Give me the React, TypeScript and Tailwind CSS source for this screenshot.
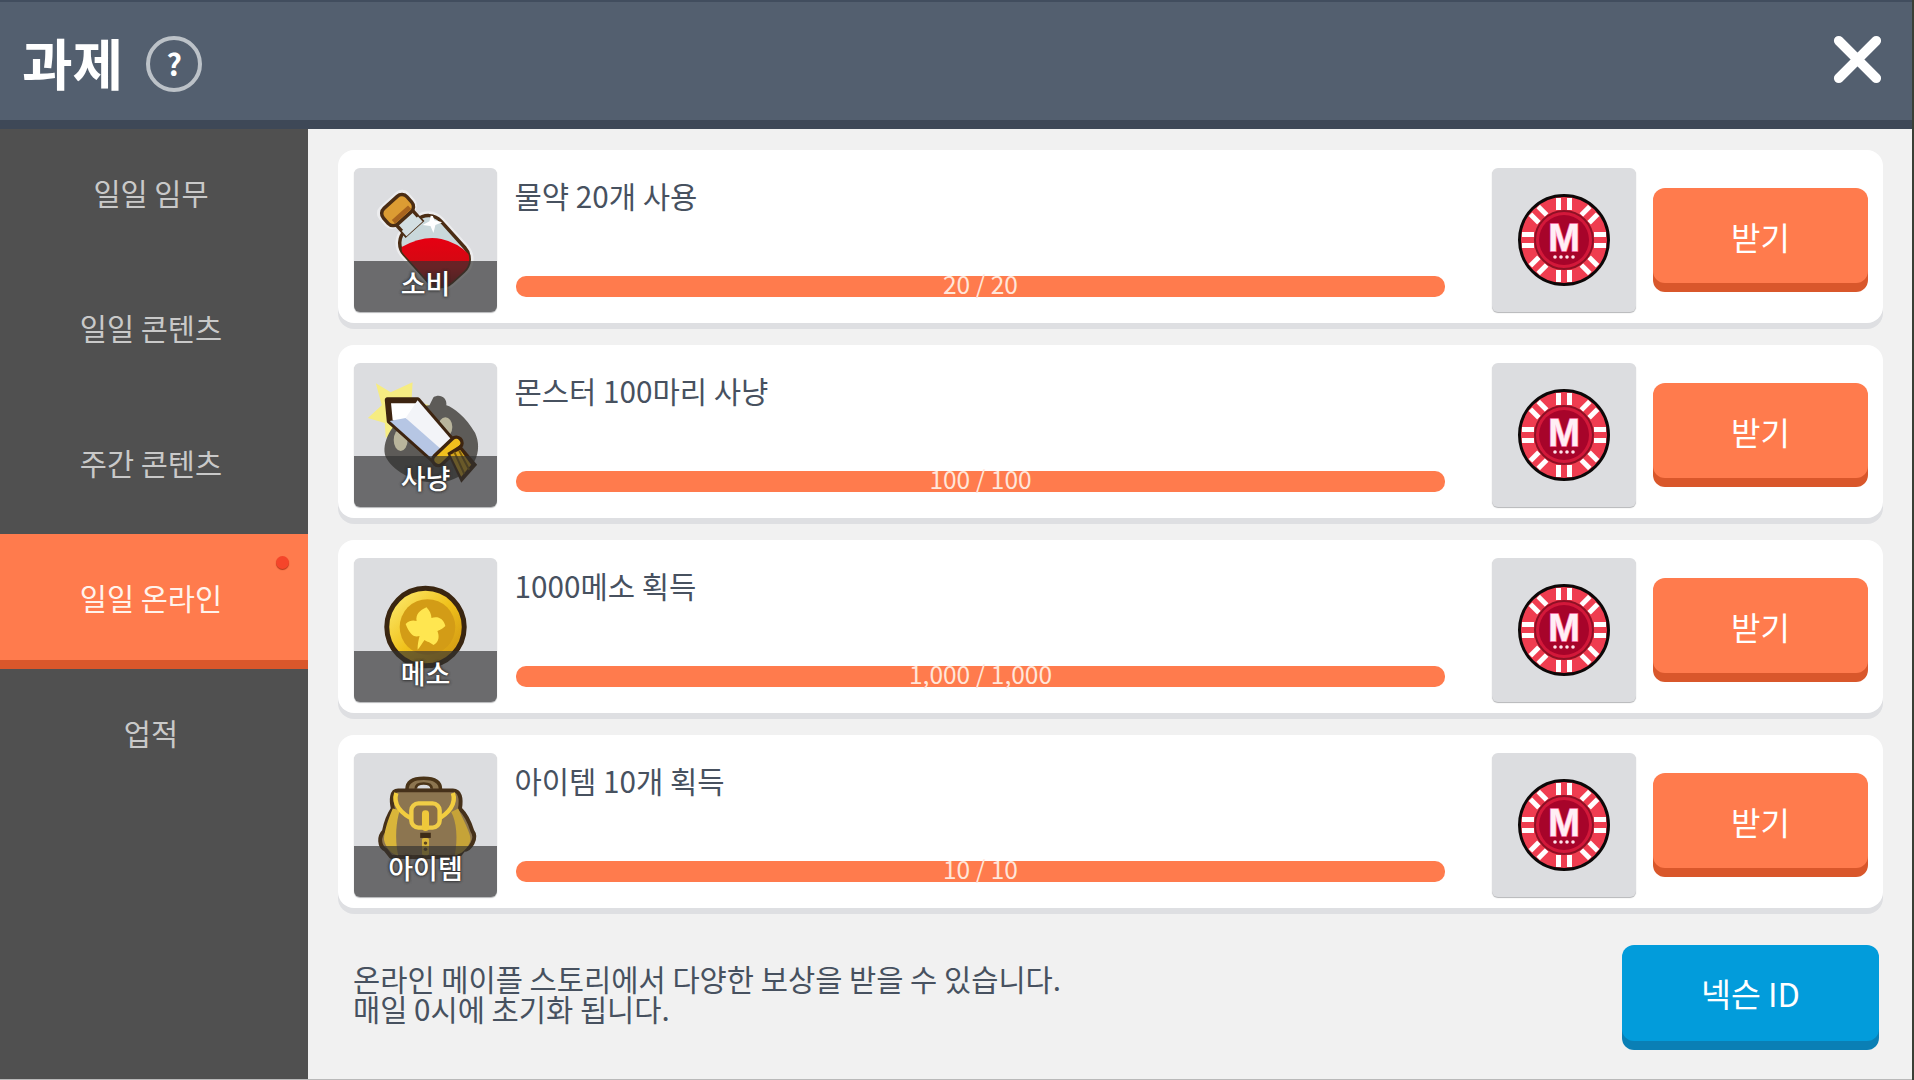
const menu = [
  { label: "일일 임무" },
  { label: "일일 콘텐츠" },
  { label: "주간 콘텐츠" },
  { label: "일일 온라인", active: true },
  { label: "업적" },
];

function BottleIcon() {
  return (
    <svg viewBox="0 0 144 144" className="h-full w-full">
      <defs>
        <clipPath id="bottle-body">
          <rect x="-25" y="-20" width="50" height="70" rx="17" transform="translate(71 72) rotate(-42)" />
        </clipPath>
        <linearGradient id="bottle-liquid" x1="0" y1="0" x2="0" y2="1">
          <stop offset="0" stopColor="#e60012" />
          <stop offset="0.5" stopColor="#d10a12" />
          <stop offset="1" stopColor="#4f0704" />
        </linearGradient>
      </defs>
      <g transform="translate(71 72) rotate(-42)">
        <rect x="-29" y="-24" width="58" height="78" rx="20" fill="#fff" fillOpacity="0.45" />
        <rect x="-20" y="-55" width="40" height="27" rx="9" fill="#fff" fillOpacity="0.45" />
        <rect x="-25" y="-20" width="50" height="70" rx="17" fill="#c9d8db" stroke="#4b2d14" strokeWidth="3.5" />
        <rect x="-11" y="-33" width="22" height="17" fill="#d3dfe2" stroke="#4b2d14" strokeWidth="3.5" />
        <rect x="-11" y="-22" width="22" height="7" fill="#d3dfe2" />
        <rect x="-16" y="-51" width="32" height="21" rx="7" fill="#dc9c33" stroke="#4b2d14" strokeWidth="3.5" />
        <rect x="-11" y="-37" width="22" height="5" fill="#a8641f" />
      </g>
      <g clipPath="url(#bottle-body)">
        <path d="M48 79 Q70 67 88 71 Q106 75 118 89 L118 130 L48 130Z" fill="url(#bottle-liquid)" />
        <path d="M78 44 l3 8 l8 2 l-7 3 l-2 8 l-3 -7 l-8 -1 l7 -4z" fill="#fff" />
      </g>
    </svg>
  );
}

function SwordIcon() {
  return (
    <svg viewBox="0 0 144 144" className="h-full w-full">
      <polygon points="22,20 37,29 59,19 58,37 76,42 60,55 66,72 48,65 32,75 31,60 14,55 28,42" fill="#f6ec82" />
      <path d="M80 34 C86 30 94 34 93 42 C100 44 113 54 122 70 C130 88 122 110 96 118 C72 124 44 114 33 96 C26 84 36 62 52 52 C60 46 70 42 76 42Z" fill="#5d5b58" />
      <ellipse cx="47" cy="77" rx="7" ry="11" fill="#b9b59c" />
      <ellipse cx="92" cy="64" rx="7" ry="10" fill="#b9b59c" />
      <polygon points="34,37 64,37 101,80 83,100 36,58" fill="#fff" stroke="#3d2410" strokeWidth="6" strokeLinejoin="round" />
      <polygon points="52,55 101,80 83,100 36,58" fill="#b6c6e4" />
      <polygon points="52,55 64,37 101,80 92,90" fill="#f3f4f8" />
      <path d="M85 97 L103 80" stroke="#3d2410" strokeWidth="15" strokeLinecap="round" />
      <path d="M85 97 L103 80" stroke="#f0bf1e" strokeWidth="8" strokeLinecap="round" />
      <polygon points="94,90 107,82 124,102 108,120" fill="#3d2410" />
      <polygon points="97,92 107,87 118,102 108,114" fill="#d6a61c" />
      <path d="M101 89 L111 111 M106 88 L116 107" stroke="#7b5c0c" strokeWidth="2" />
    </svg>
  );
}

function CoinIcon() {
  return (
    <svg viewBox="0 0 144 144" className="h-full w-full">
      <defs>
        <linearGradient id="coin-rim" x1="0" y1="0" x2="1" y2="1">
          <stop offset="0" stopColor="#fff07a" />
          <stop offset="0.5" stopColor="#f0c21c" />
          <stop offset="1" stopColor="#c98c10" />
        </linearGradient>
      </defs>
      <circle cx="72" cy="69" r="39" fill="url(#coin-rim)" stroke="#3a2611" strokeWidth="5" />
      <circle cx="74" cy="69" r="28" fill="#d39c16" />
      <path d="M73 49 C76 52 78 56 78 60 C84 58 90 60 92 68 C88 72 86 72 84 73 C86 78 86 84 80 87 C76 84 74 84 71 82 C68 86 66 90 64 92 C64 86 65 82 66 78 C60 80 56 76 52 66 C56 62 60 62 63 63 C62 56 66 52 73 49Z" fill="#ffe650" />
    </svg>
  );
}

function BagIcon() {
  return (
    <svg viewBox="0 0 144 144" className="h-full w-full">
      <g transform="translate(72 25) scale(0.89 0.87) translate(-73 -21)">
        <path d="M52 34 C52 24 60 21 71 21 C82 21 90 24 90 34" fill="#8c7550" stroke="#4a3418" strokeWidth="4" />
        <path d="M62 33 C62 28 66 27 71 27 C76 27 80 28 80 33" fill="#d9dadd" stroke="#4a3418" strokeWidth="3" />
        <path d="M42 35 H104 C112 35 114 44 112 56 C118 62 122 68 126 82 C132 90 124 104 116 104 L110 112 H34 L28 104 C20 100 20 88 26 82 C28 72 32 62 36 56 C34 46 34 35 42 35Z" fill="#8c7550" stroke="#46311a" strokeWidth="4.5" strokeLinejoin="round" />
        <path d="M36 56 C30 70 26 84 26 92 C28 102 36 110 42 110 C38 90 40 70 44 58Z" fill="#d9b53a" />
        <path d="M110 56 C116 70 124 84 124 92 C122 102 112 110 106 110 C110 92 108 70 102 60Z" fill="#c6a338" />
        <path d="M40 38 C36 50 44 62 62 70 M104 38 C108 50 100 62 84 70" fill="none" stroke="#f2cd3f" strokeWidth="5" />
        <rect x="57" y="50" width="32" height="28" rx="8" fill="#8a6f48" stroke="#f0cd46" strokeWidth="5" />
        <rect x="69" y="58" width="8" height="24" rx="4" fill="#efc83a" />
        <rect x="67" y="84" width="12" height="6" fill="#3e2c17" />
        <rect x="69" y="90" width="8" height="20" rx="2" fill="#d9b53a" />
        <circle cx="73" cy="96" r="2" fill="#5b4520" />
        <circle cx="73" cy="103" r="2" fill="#5b4520" />
      </g>
    </svg>
  );
}

function ChipIcon() {
  const angles = [0, 45, 90, 135, 180, 225, 270, 315];
  return (
    <svg viewBox="0 0 144 144" className="h-full w-full">
      <g transform="translate(1 0)">
        <circle cx="71" cy="72" r="44.5" fill="#ef3d50" stroke="#0c0808" strokeWidth="3" />
        {angles.map((a) => (
          <g key={a} transform={`rotate(${a} 71 72)`}>
            <rect x="63" y="30" width="5" height="12" fill="#fff" />
            <rect x="74" y="30" width="5" height="12" fill="#fff" />
          </g>
        ))}
        <circle cx="71" cy="72" r="29" fill="#d3183a" stroke="#8e1024" strokeWidth="2" />
        <circle cx="71" cy="72" r="25" fill="#a7042a" />
        <text x="71" y="83" textAnchor="middle" fontFamily="Liberation Sans, sans-serif" fontWeight="700" fontSize="38" fill="#ffeef4" stroke="#ff7fae" strokeWidth="1.5" paintOrder="stroke">
          M
        </text>
        {[62, 68, 74, 80].map((x) => (
          <circle key={x} cx={x} cy="89" r="1.8" fill="#ffe3ea" />
        ))}
      </g>
    </svg>
  );
}

const tasks = [
  { title: "물약 20개 사용", tag: "소비", progress: "20 / 20", icon: <BottleIcon /> },
  { title: "몬스터 100마리 사냥", tag: "사냥", progress: "100 / 100", icon: <SwordIcon /> },
  { title: "1000메소 획득", tag: "메소", progress: "1,000 / 1,000", icon: <CoinIcon /> },
  { title: "아이템 10개 획득", tag: "아이템", progress: "10 / 10", icon: <BagIcon /> },
];

function TaskCard({ title, tag, progress, icon }: { title: string; tag: string; progress: string; icon: React.ReactNode }) {
  return (
    <div className="flex h-[173px] items-start rounded-2xl bg-white pt-[18px] pr-[15px] pl-4 shadow-[0_6px_0_#dedfe2]">
      <div className="relative h-[144px] w-[143px] shrink-0 overflow-hidden rounded-md bg-[#dcdde0] shadow-[0_1px_1px_#b5b6b8]">
        {icon}
        <div className="absolute inset-x-0 bottom-0 flex h-[51px] items-center justify-center bg-[#303030]/[.66] pb-[6px] text-[27px] font-medium text-white [text-shadow:0_0_3px_#2a2a2a,0_0_3px_#2a2a2a]">
          {tag}
        </div>
      </div>
      <div className="ml-[19px] flex h-[129px] w-[929px] shrink-0 flex-col justify-between">
        <div className="-ml-[1.5px] text-[29.7px] leading-[56px] text-[#47515f]">{title}</div>
        <div className="flex h-[21px] items-center justify-center rounded-[10px] bg-[#ff7b4d] pb-[5px] text-[24.5px] text-[#ffe6da]">{progress}</div>
      </div>
      <div className="ml-[47px] h-[144px] w-[144px] shrink-0 rounded-md bg-[#dcdde0] shadow-[0_1px_1px_#b5b6b8]">
        <ChipIcon />
      </div>
      <button className="mt-[20px] ml-[17px] h-[95px] w-[215px] shrink-0 rounded-xl bg-[#ff7b4d] text-[32px] text-white shadow-[0_9px_0_#d9572b]">받기</button>
    </div>
  );
}

export default function App() {
  return (
    <div className="h-[1080px] w-[1914px] overflow-hidden bg-[#3a3f36] font-['Noto_Sans_CJK_KR','Noto_Sans',sans-serif]">
      <div className="flex h-[1080px] w-[1912px] flex-col border-b border-[#b9b9b9]">
        <header className="flex h-[129px] shrink-0 items-center justify-between border-t-2 border-b-[9px] border-t-[#414d5e] border-b-[#3e4857] bg-[#535f6f] pr-[17px] pl-[22px]">
          <div className="flex items-center gap-[23px]">
            <h1 className="text-[55px] leading-none font-semibold text-white">과제</h1>
            <div className="mt-[5px] flex h-[56px] w-[56px] items-center justify-center rounded-full border-4 border-[#bcc2c8] text-[30px] font-bold text-white">?</div>
          </div>
          <svg viewBox="0 0 48 48" className="-mt-[3px] h-[75px] w-[75px] text-white" fill="none" stroke="currentColor" strokeWidth="6.2" strokeLinecap="round">
            <path d="M12 12 L36 36 M36 12 L12 36" />
          </svg>
        </header>
        <div className="flex min-h-0 flex-1">
          <nav className="w-[308px] shrink-0 bg-[#505050]">
            {menu.map((m) => (
              <div
                key={m.label}
                className={
                  m.active
                    ? "relative flex h-[135px] items-center justify-center border-b-[9px] border-[#d9572b] bg-[#ff7b4d] pr-[6px] text-[29.5px] text-[#fff3ec]"
                    : "flex h-[135px] items-center justify-center border-b-[9px] border-transparent pr-[6px] text-[29.5px] text-[#c9c9c9]"
                }
              >
                {m.label}
                {m.active && <span className="absolute top-[22px] right-[19px] h-[13px] w-[13px] rounded-full bg-[#f5452a] shadow-[0_1px_1px_#b23a1c]" />}
              </div>
            ))}
          </nav>
          <main className="flex min-w-0 flex-1 flex-col bg-[#f1f1f1] pt-[21px] pr-[29px] pl-[30px]">
            <div className="flex flex-col gap-[22px]">
              {tasks.map((t) => (
                <TaskCard key={t.title} {...t} />
              ))}
            </div>
            <div className="mt-[37px] flex items-start justify-between">
              <p className="mt-[19px] ml-[15px] text-[29.6px] leading-[30px] text-[#47515f]">
                온라인 메이플 스토리에서 다양한 보상을 받을 수 있습니다.
                <br />
                매일 0시에 초기화 됩니다.
              </p>
              <button className="mr-[4px] h-[96px] w-[257px] rounded-xl bg-[#029cdb] text-[32.5px] text-white shadow-[0_9px_0_#0a7fb5]">넥슨 ID</button>
            </div>
          </main>
        </div>
      </div>
    </div>
  );
}
